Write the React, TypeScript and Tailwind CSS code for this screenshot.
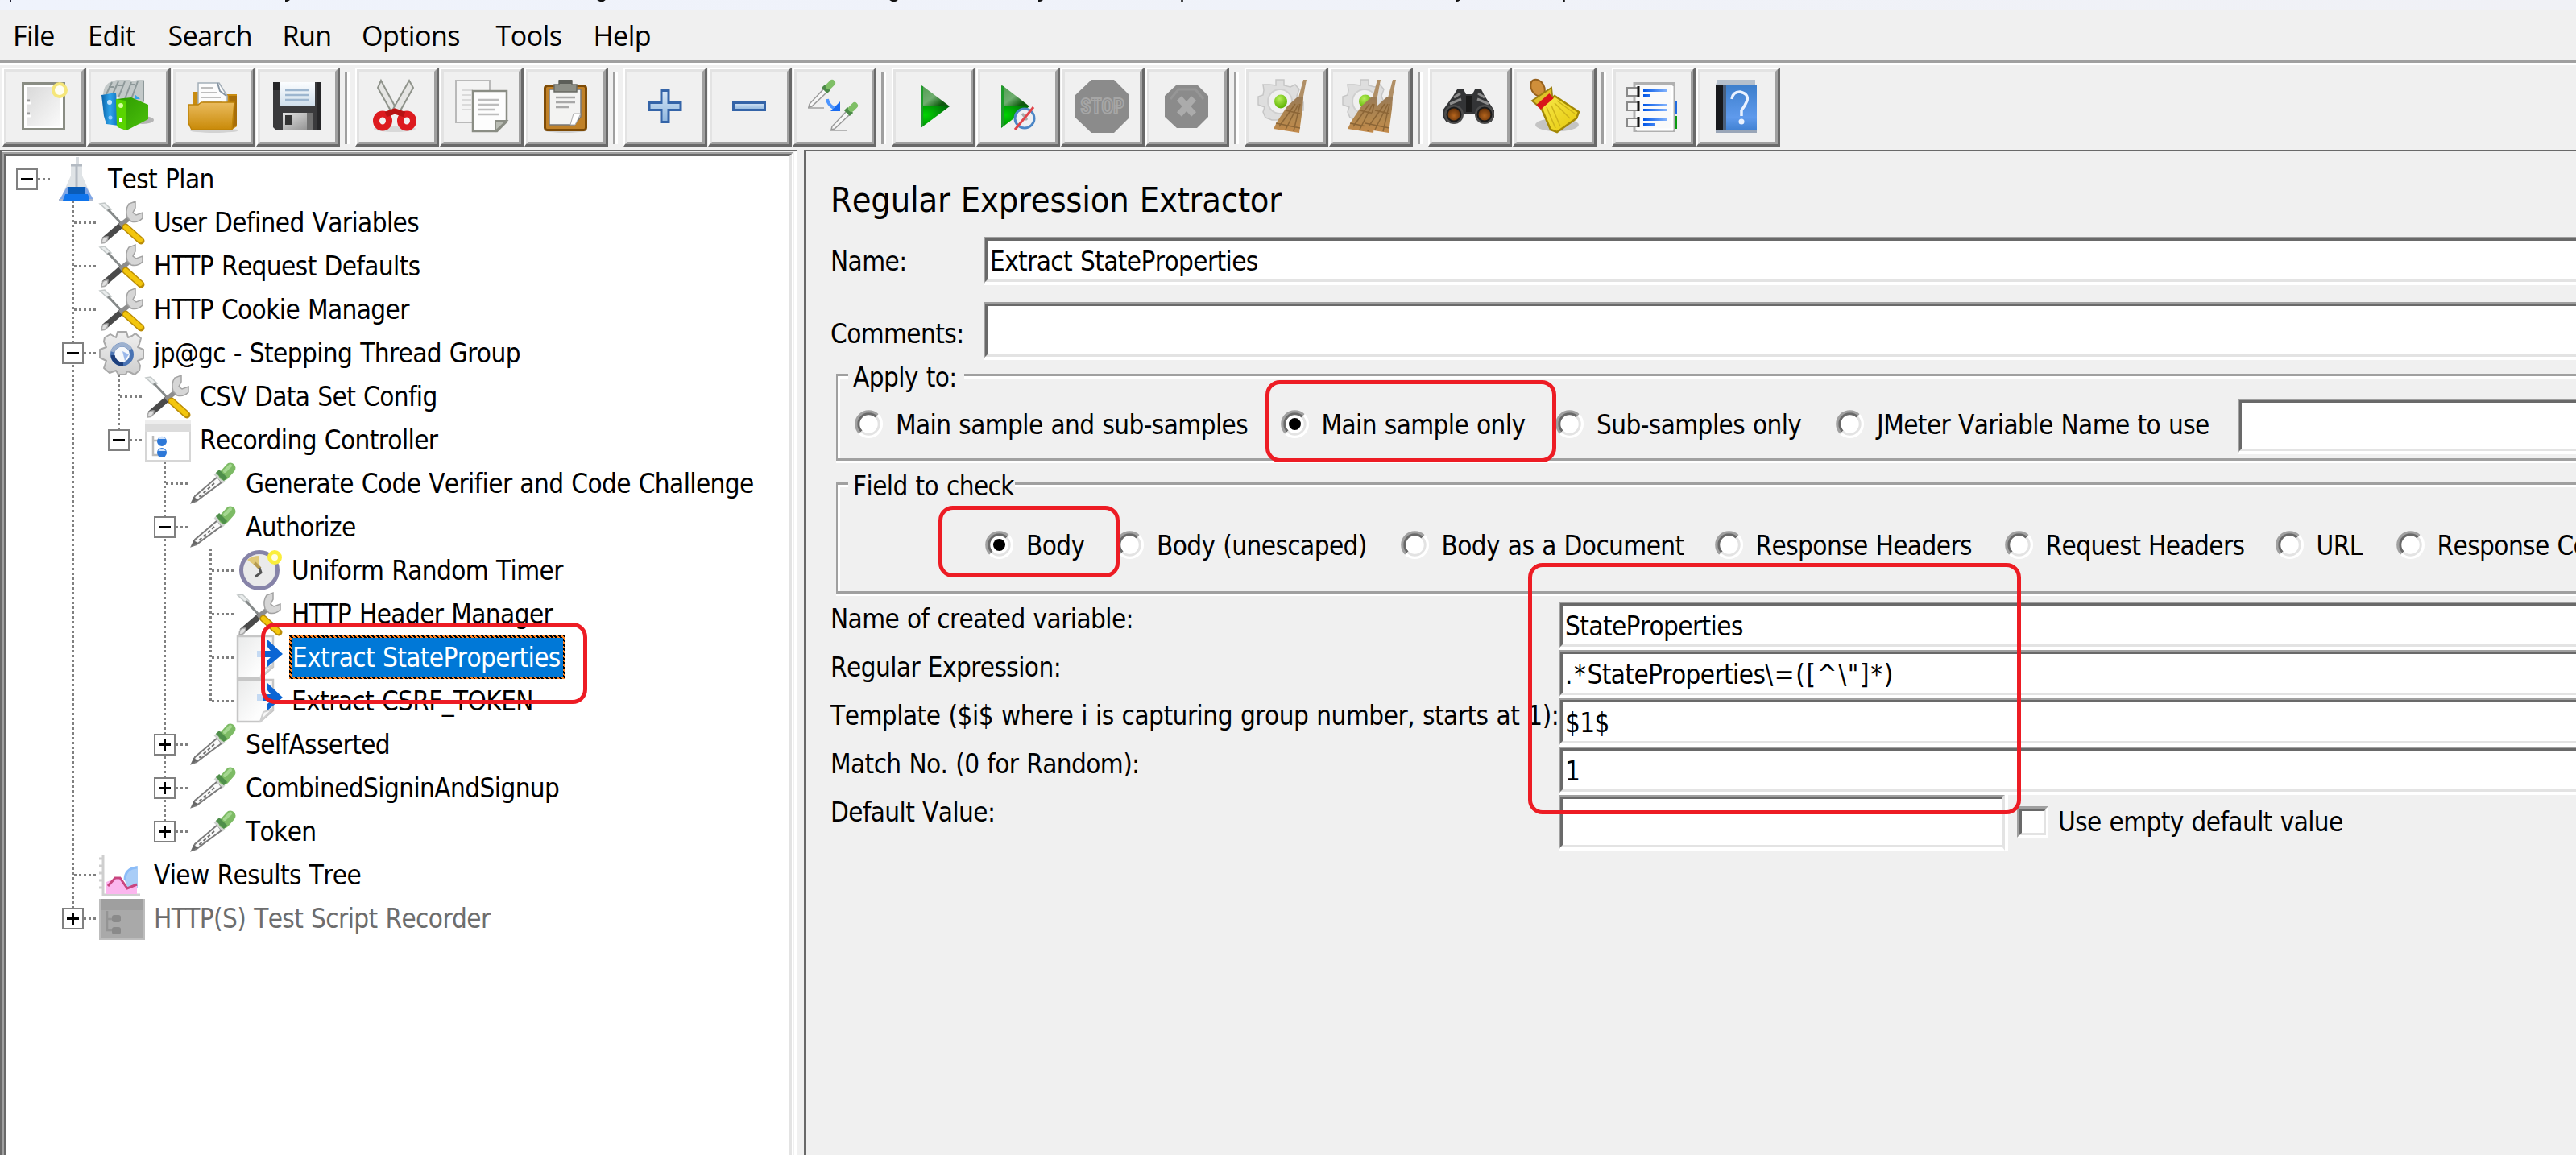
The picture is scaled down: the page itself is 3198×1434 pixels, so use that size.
import React from "react";

/* ---------- toolbar icons (66 x 66) ---------- */

const Defs = () => (
  <svg className="absolute h-0 w-0">
    <defs>
      <linearGradient id="paper" x1="0" y1="0" x2="1" y2="1">
        <stop offset="0" stopColor="#d9d9d9" />
        <stop offset="1" stopColor="#fafafa" />
      </linearGradient>
      <linearGradient id="sheet" x1="0" y1="0" x2="1" y2="1">
        <stop offset="0" stopColor="#e9eaea" />
        <stop offset=".7" stopColor="#fdfdfd" />
      </linearGradient>
      <linearGradient id="blueSpine" x1="0" y1="0" x2="1" y2="0">
        <stop offset="0" stopColor="#0a62a8" />
        <stop offset=".5" stopColor="#2fa3ea" />
        <stop offset="1" stopColor="#0f6fbd" />
      </linearGradient>
      <linearGradient id="greenFace" x1="0" y1="0" x2="1" y2="1">
        <stop offset="0" stopColor="#2d9a00" />
        <stop offset="1" stopColor="#4cc10c" />
      </linearGradient>
      <linearGradient id="folder" x1="0" y1="0" x2="0" y2="1">
        <stop offset="0" stopColor="#eabb5e" />
        <stop offset="1" stopColor="#c98a08" />
      </linearGradient>
      <linearGradient id="label" x1="0" y1="0" x2="0" y2="1">
        <stop offset="0" stopColor="#fbfdff" />
        <stop offset="1" stopColor="#cfdeeb" />
      </linearGradient>
      <linearGradient id="shutter" x1="0" y1="0" x2="1" y2="1">
        <stop offset="0" stopColor="#e2e2e2" />
        <stop offset="1" stopColor="#8c8c8c" />
      </linearGradient>
      <linearGradient id="sky" x1="0" y1="0" x2="0" y2="1">
        <stop offset="0" stopColor="#d6e6f6" />
        <stop offset="1" stopColor="#8db5de" />
      </linearGradient>
      <linearGradient id="playTop" x1="0" y1="0" x2="1" y2="1">
        <stop offset="0" stopColor="#4d9a4d" />
        <stop offset=".5" stopColor="#6fae6f" />
        <stop offset=".8" stopColor="#0f5a0f" />
      </linearGradient>
      <radialGradient id="playLow" cx=".15" cy=".4" r=".9">
        <stop offset="0" stopColor="#00d400" />
        <stop offset="1" stopColor="#00640a" />
      </radialGradient>
      <linearGradient id="straw" x1="0" y1="0" x2="0" y2="1">
        <stop offset="0" stopColor="#9a7b56" />
        <stop offset=".6" stopColor="#b3884f" />
        <stop offset="1" stopColor="#c2894a" />
      </linearGradient>
      <linearGradient id="yellow" x1="0" y1="0" x2="1" y2="1">
        <stop offset="0" stopColor="#f6e84a" />
        <stop offset="1" stopColor="#e6c80a" />
      </linearGradient>
      <linearGradient id="book" x1="0" y1="0" x2="0" y2="1">
        <stop offset="0" stopColor="#3c7ecb" />
        <stop offset=".7" stopColor="#5f9aec" />
        <stop offset="1" stopColor="#3f7fd0" />
      </linearGradient>
      <linearGradient id="ink" gradientUnits="userSpaceOnUse" x1="20" y1="0" x2="52" y2="0">
        <stop offset="0" stopColor="#0055e6" />
        <stop offset="1" stopColor="#8fbcff" />
      </linearGradient>
      <radialGradient id="greenBall" cx=".4" cy=".3" r=".7">
        <stop offset="0" stopColor="#b7ee5a" />
        <stop offset="1" stopColor="#5cb300" />
      </radialGradient>
      <radialGradient id="lens" cx=".5" cy=".6" r=".6">
        <stop offset="0" stopColor="#b5651d" />
        <stop offset="1" stopColor="#5a2b08" />
      </radialGradient>
      <linearGradient id="steel" x1="0" y1="0" x2="0" y2="1">
        <stop offset="0" stopColor="#f0f0f0" />
        <stop offset="1" stopColor="#cfcfcf" />
      </linearGradient>
    </defs>
  </svg>
);

const NewIcon = () => (
  <>
    <rect x="6.5" y="4.5" width="51" height="57" fill="#fff" stroke="#8a8d84" strokeWidth="3" />
    <rect x="11" y="9" width="42" height="48" fill="url(#paper)" />
    <path d="M11 26h4M11 42h4" stroke="#999" strokeWidth="3" />
    <path d="M11 29h5M11 45h5" stroke="#fff" strokeWidth="3" />
    <circle cx="52" cy="13" r="8" fill="#fffef0" stroke="#f5e67a" strokeWidth="4" />
  </>
);

const TemplatesIcon = () => (
  <>
    <ellipse cx="50" cy="50" rx="14" ry="5" fill="#b5b5b5" />
    <path d="M1 18 Q2 5 12 2 L18 0 H34 L38 2 L44 0 H52 V28 H30 L20 22 H4Z" fill="#c3c9c9" />
    <path d="M12 3 L5 18M20 2 L12 20M28 2 L20 22M36 3 L28 24M44 2 L36 24M51 2V26M8 9h6M20 7h6M34 6h6" stroke="#8d9899" strokeWidth="2" fill="none" />
    <path d="M40 18l7 6h-6z" fill="#35a3e8" />
    <path d="M-1 19 L17 16 L20 57 L5 55 L2 45Z" fill="url(#blueSpine)" />
    <circle cx="9" cy="28" r="3" fill="#bfe3ff" />
    <circle cx="10" cy="47" r="2.5" fill="#8ccaff" />
    <path d="M17 24 L36 22 L57 31 V49 L30 63 L19 59Z" fill="url(#greenFace)" />
    <path d="M17 24 L29 26 L30 63 L18 58Z" fill="#59d400" />
    <circle cx="23" cy="32" r="3" fill="#d6ff9e" />
    <rect x="21" y="48" width="4" height="4" fill="#fff" />
  </>
);

const OpenIcon = () => (
  <>
    <ellipse cx="34" cy="63" rx="30" ry="3" fill="#d2d2d2" />
    <path d="M8 15h8v20H8zM44 18h18v40l-6 4H44z" fill="#c98c10" />
    <path d="M52 20h10v36l-6 5z" fill="#a86e0a" />
    <path d="M14 4h26l10 16v14H14z" fill="#fcfcfc" stroke="#a3aeb8" strokeWidth="1.5" />
    <path d="M38 4l3 10 8 6" fill="none" stroke="#8795a3" strokeWidth="2" />
    <path d="M18 10h15M18 16h20M18 22h24M20 28h24" stroke="#bdbdbd" strokeWidth="2" />
    <path d="M2 31h12l4-3h41l-3 34H6L2 54z" fill="url(#folder)" stroke="#bd8208" strokeWidth="1.5" />
  </>
);

const SaveIcon = () => (
  <>
    <path d="M2 3h60v60H6l-4-4z" fill="#3a3a3c" />
    <path d="M2 3h8v10H2zM56 3h6v60h-6z" fill="#262628" />
    <rect x="11" y="3" width="43" height="30" fill="url(#label)" />
    <path d="M17 13h30M17 19h30M17 25h30" stroke="#9db6cf" strokeWidth="2.5" />
    <rect x="14" y="41" width="38" height="21" fill="url(#shutter)" />
    <rect x="17" y="44" width="9" height="12" fill="#333" />
    <path d="M44 41h8v21h-8z" fill="#707070" />
  </>
);

const CutIcon = () => (
  <>
    <ellipse cx="30" cy="61" rx="26" ry="4" fill="#d8d8d8" />
    <path d="M13 1 L9 10 L26 40 L33 38Z" fill="#e6e6e4" stroke="#8f938b" strokeWidth="2" />
    <path d="M48 1 L53 10 L36 40 L27 38Z" fill="#e6e6e4" stroke="#8f938b" strokeWidth="2" />
    <ellipse cx="15" cy="51" rx="8" ry="8.5" fill="none" stroke="#dd1b1f" strokeWidth="8" />
    <ellipse cx="45" cy="51" rx="8" ry="8.5" fill="none" stroke="#dd1b1f" strokeWidth="8" />
    <path d="M19 43 L30 39 L42 43" stroke="#b81212" strokeWidth="7" fill="none" />
  </>
);

const CopyIcon = () => (
  <>
    <rect x="1" y="1" width="42" height="52" fill="#f4f4f4" stroke="#b9b9b9" strokeWidth="2" />
    <path d="M8 13h14M8 19h12M8 25h12M8 31h12M8 37h12" stroke="#dadada" strokeWidth="2" />
    <path d="M22 14h42v38L52 64H22z" fill="#fdfdfd" stroke="#8a8d84" strokeWidth="2.5" />
    <path d="M29 25h26M29 31h26M29 37h20M29 43h26" stroke="#bdbdbd" strokeWidth="2.5" />
    <path d="M64 51H50v13z" fill="#b9bcb4" stroke="#8a8d84" strokeWidth="2" />
  </>
);

const PasteIcon = () => (
  <>
    <ellipse cx="32" cy="63" rx="26" ry="3" fill="#d0d0d0" />
    <rect x="6.5" y="7.5" width="51" height="55" rx="3" fill="#c08128" stroke="#7d4b07" strokeWidth="3" />
    <path d="M12 12h39v34l-8 10H12z" fill="#f3f3f2" stroke="#777" strokeWidth="1.5" />
    <path d="M20 22h24M20 28h24M20 34h16" stroke="#a8a8a8" strokeWidth="2.5" />
    <path d="M51 42h-9l-4 14h6z" fill="#fff" stroke="#aaa" strokeWidth="1" />
    <path d="M24 1h16v5h6v9H18V6h6z" fill="#8c8e86" stroke="#686a63" strokeWidth="1.5" />
    <rect x="24" y="0" width="16" height="5" fill="#5c5e58" />
  </>
);

const PlusIcon = () => (
  <path d="M28 13.500h9v15h15v9h-15v15h-9v-15h-15v-9h15z" fill="url(#sky)" stroke="#3464a8" strokeWidth="3" />
);

const MinusIcon = () => <rect x="12.500" y="28.500" width="39" height="9" fill="url(#sky)" stroke="#3464a8" strokeWidth="3" />;

const MiniPipette = () => (
  <>
    <path d="M0 35h20" stroke="#b5b5b5" strokeWidth="2" />
    <path d="M20 11 L2 30 L1 34 L5 33 L24 15Z" fill="#f7f7f7" stroke="#999" strokeWidth="1.500" />
    <path d="M19 8 L26 15" stroke="#4c8a48" strokeWidth="6" />
    <path d="M26 8 L30 4" stroke="#7fbf66" strokeWidth="8" strokeLinecap="round" />
  </>
);

const ToggleIcon = () => (
  <>
    <MiniPipette />
    <g transform="translate(28 28)">
      <MiniPipette />
    </g>
    <path d="M24 24 Q25 31 32 35" fill="none" stroke="#4c95ff" strokeWidth="4" />
    <path d="M40 27v12H28z" fill="#1a6cf0" />
  </>
);

const PlayIcon = () => (
  <>
    <path d="M17 6 L53 33 H17Z" fill="url(#playTop)" />
    <path d="M17 33 H53 L17 60Z" fill="url(#playLow)" />
    <path d="M18.500 8v50" stroke="#1e9a2a" strokeWidth="3" />
  </>
);

const PlayNoTimersIcon = () => (
  <>
    <path d="M12 6 L47 33 H12Z" fill="url(#playTop)" />
    <path d="M12 33 H47 L12 60Z" fill="url(#playLow)" />
    <path d="M13.500 8v50" stroke="#1e9a2a" strokeWidth="3" />
    <circle cx="41" cy="48" r="12" fill="#eef0f3" stroke="#4b86c6" strokeWidth="3" />
    <path d="M38 42l6 8" stroke="#aaa" strokeWidth="3" />
    <path d="M52 34 L29 62" stroke="#e0454a" strokeWidth="3" />
  </>
);

const StopIcon = () => (
  <>
    <path d="M19 0h28l19 19v28L47 66H19L-1 47V19z" fill="#8b8b8b" />
    <text x="32.500" y="42" textAnchor="middle" textLength="54" lengthAdjust="spacingAndGlyphs" fontFamily="Roboto, sans-serif" fontWeight="700" fontSize="26" letterSpacing="0" fill="#8b8b8b" stroke="#a6a6a6" strokeWidth="2">
      STOP
    </text>
  </>
);

const ShutdownIcon = () => (
  <>
    <path d="M20 6h25l14 14v26L45 60H20L5 46V20z" fill="#8b8b8b" />
    <path d="M12 24l10-12h21l10 12" fill="none" stroke="#969696" strokeWidth="3" />
    <path d="M23 23l18 20M41 23L23 43" stroke="#ababab" strokeWidth="8" />
  </>
);

const GearPart = () => (
  <>
    <path d="M20 0h10v7l8 2 6-3 5 6-3 8 3 8h5v10h-5l-4 8-10 4H15l-8-3-3-7 2-6-8-3V21l6-2 1-6-1-7h8l8 1z" fill="#dedede" stroke="#c6c6c6" strokeWidth="1.500" />
    <circle cx="25" cy="27" r="15" fill="#f0f0f0" stroke="#cfcfcf" strokeWidth="2" />
    <ellipse cx="26" cy="27" rx="8" ry="8.500" fill="url(#greenBall)" />
  </>
);

const BroomPart = () => (
  <>
    <path d="M54 0h4l-5 26h-6z" fill="#b08f66" />
    <path d="M46 22h8l-1 14-4 30-32-5 5-10 12-18z" fill="url(#straw)" />
    <path d="M44 30L24 58M48 30L32 62M50 30L42 64M20 54l30 6M32 38l18 4" stroke="#8b6536" strokeWidth="1.500" />
  </>
);

const ClearIcon = () => (
  <>
    <GearPart />
    <BroomPart />
  </>
);

const ClearAllIcon = () => (
  <>
    <GearPart />
    <g transform="translate(-13 0)">
      <BroomPart />
    </g>
    <g transform="translate(6 0)">
      <BroomPart />
    </g>
  </>
);

const SearchIcon = () => (
  <>
    <path d="M17 12h8l3 6h8l3-6h8l4 8 12 18v8l-4 7H46l-4-10H22l-4 10H4l-5-7v-8L12 20z" fill="#333436" />
    <path d="M13 22l8-5M43 17l8 5M8 30l14-6M42 24l14 6" stroke="#8b8b8b" strokeWidth="3" />
    <path d="M28 20h8v20h-8z" fill="#1a1a1a" />
    <circle cx="13" cy="43" r="12" fill="#4c4c4c" />
    <circle cx="51" cy="43" r="12" fill="#4c4c4c" />
    <circle cx="13" cy="43" r="8.500" fill="url(#lens)" stroke="#1b1b1b" strokeWidth="2" />
    <circle cx="51" cy="43" r="8.500" fill="url(#lens)" stroke="#1b1b1b" strokeWidth="2" />
  </>
);

const ResetSearchIcon = () => (
  <>
    <ellipse cx="36" cy="56" rx="27" ry="8" fill="#c4c4c4" />
    <ellipse cx="12" cy="10" rx="8" ry="11" transform="rotate(-30 12 10)" fill="#cf8f3a" stroke="#96601c" strokeWidth="2" />
    <path d="M5 26 L29 10 L30 20 L14 34Z" fill="#e0c228" stroke="#9c7f10" strokeWidth="2" />
    <path d="M33 20 L63 40 L60 48 L36 65 L28 62 L16 34Z" fill="url(#yellow)" stroke="#a38806" strokeWidth="2.500" />
    <path d="M29 32L40 58M33 29L52 48M36 26L58 42M23 34L34 60" stroke="#cdb21a" strokeWidth="1.500" />
    <path d="M13 34 L29 20" stroke="#d8161b" strokeWidth="8" />
  </>
);

const FunctionIcon = () => (
  <>
    <rect x="56" y="27" width="6" height="16" fill="#1f6be0" />
    <rect x="56" y="45" width="6" height="16" fill="#0a9a10" />
    <rect x="9" y="4.500" width="49" height="59" fill="#fafafa" stroke="#b0b0b0" strokeWidth="3" />
    <path d="M12 62h45M56 8v54" stroke="#fff" strokeWidth="3" />
    {[14, 32, 52].map((y) => (
      <g key={y}>
        <rect x="0" y={y - 4} width="14" height="10" fill="#f4f4f4" stroke="#8a8a8a" strokeWidth="2" />
        <path d={`M14 ${y - 6}v13`} stroke="#111" strokeWidth="3" />
      </g>
    ))}
    <path d="M20 12h30v3H20zM20 18h9v3h-9zM20 30h30v3H20zM20 36h30v3H20zM20 48h30v3H20zM20 54h15v3H20z" fill="url(#ink)" />
  </>
);

const HelpIcon = () => (
  <>
    <path d="M7 0h47v7H5z" fill="#b4bfcc" />
    <rect x="15" y="6" width="41" height="58" fill="url(#book)" />
    <path d="M5 6h9v58H5z" fill="#17181c" />
    <path d="M14 6h4v58h-4z" fill="#4a5f7c" />
    <path d="M5 63h51v3H5z" fill="#9aa6b8" />
    <path d="M25 24 Q26 15 35 15 Q46 17 44 26 Q41 33 37 38 V45" fill="none" stroke="#eaf2ff" strokeWidth="3.500" />
    <circle cx="37" cy="52" r="3.500" fill="#eaf2ff" />
  </>
);

const toolGroups: React.FC[][] = [
  [NewIcon, TemplatesIcon, OpenIcon, SaveIcon],
  [CutIcon, CopyIcon, PasteIcon],
  [PlusIcon, MinusIcon, ToggleIcon],
  [PlayIcon, PlayNoTimersIcon, StopIcon, ShutdownIcon],
  [ClearIcon, ClearAllIcon],
  [SearchIcon, ResetSearchIcon],
  [FunctionIcon, HelpIcon],
];

const ToolButton = ({ Icon }: { Icon: React.FC }) => (
  <button className="h-[98px] w-[104px] shrink-0 border-t-2 border-r-[3px] border-b-[3px] border-l-2 border-t-white border-r-[#696969] border-b-[#696969] border-l-white">
    <span className="flex h-full w-full border-t-[3px] border-r-[3px] border-b-[3px] border-l-[3px] border-t-[#e3e3e3] border-r-[#a0a0a0] border-b-[#a0a0a0] border-l-[#e3e3e3] pt-[10px] pl-[14px]">
      <svg width="66" height="66" viewBox="0 0 66 66" className="shrink-0 overflow-visible">
        <Icon />
      </svg>
    </span>
  </button>
);

/* ---------- tree icons (57 x 54) ---------- */

const Flask = () => (
  <>
    <path d="M28 0h4v10h-4z" fill="#d8dce0" />
    <path d="M22 9h14v14l12 27q2 4-3 4H13q-5 0-3-4l12-27z" fill="#dfe3e6" />
    <path d="M22 10h14M29 10v28" stroke="#b3bac2" strokeWidth="3" />
    <path d="M17 37h24l8 14v3H9v-3z" fill="#7fa6e6" />
    <path d="M19 37h20v10H19z" fill="#0a5cb8" />
    <path d="M15 46h28l3 8H12z" fill="#0f74ec" />
    <path d="M7 53h5M45 53h5" stroke="#a9b6cf" strokeWidth="2" />
  </>
);

const Tools = () => (
  <>
    <path d="M1 4l6-1 8 8-4 2z" fill="#e9ecec" stroke="#c3c8c8" strokeWidth="1.500" />
    <path d="M11 11 L30 31" stroke="#868a8a" strokeWidth="3" />
    <path d="M6 49 L28 30" stroke="#4a4a4a" strokeWidth="7.500" />
    <path d="M3 53q0-9 8-8 0 8-8 8z" fill="#e0e0e0" stroke="#aaa" strokeWidth="1.500" />
    <path d="M26 31 L40 20" stroke="#8d8d8d" strokeWidth="6" />
    <path d="M35 21q-3-10 2-17l8-3v8l-3 6 4 3 8-3v7q-6 6-14 4z" fill="#d6d6d6" stroke="#a2a2a2" strokeWidth="1.500" />
    <path d="M33 33 L52 50" stroke="#b98c08" strokeWidth="9" strokeLinecap="round" />
    <path d="M33 33 L51 49" stroke="#f3c60d" strokeWidth="6" strokeLinecap="round" />
  </>
);

const Gear = () => (
  <>
    <path
      d="M23 1h11l2 7 5-2 4-3 7 6-2 7-2 4 7 3v11l-7 3 3 6-1 6-6 5-6-3-3-1-2 4H24l-3-5-8 3-7-6 3-9-8-4V23l8-3-3-7 1-5 7-4 7 4z"
      fill="url(#steel)"
      stroke="#a9a9a9"
      strokeWidth="2"
      strokeLinejoin="round"
    />
    <circle cx="28.500" cy="29" r="12" fill="#f6f8fb" stroke="#4a74b4" strokeWidth="5" />
    <path d="M17 30a12 12 0 0 0 13 11" fill="none" stroke="#1d3f7c" strokeWidth="5" />
    <path d="M17 26a12 12 0 0 1 22-3" fill="none" stroke="#9db1cf" strokeWidth="5" />
    <path d="M29 25l8 4-5 8z" fill="#9bb8ea" />
  </>
);

const Controller = () => (
  <>
    <rect x="1" y="3" width="55" height="50" fill="#fff" stroke="#d6d6d6" strokeWidth="2" />
    <rect x="0" y="2" width="57" height="15" fill="#dcdcdc" />
    <rect x="0" y="2" width="57" height="6" fill="#ededed" />
    <path d="M10 22v24h8M10 28h6" fill="none" stroke="#bcbcbc" strokeWidth="2.500" />
    <circle cx="21" cy="29" r="6" fill="#2d78d8" />
    <circle cx="21" cy="43" r="6" fill="#2d78d8" />
    <path d="M16 26q5-7 10 0zM16 41q5-6 10 0z" fill="#cfe2fb" />
  </>
);

const ControllerOff = () => (
  <>
    <rect x="0" y="3" width="57" height="51" fill="#bdbdbd" />
    <rect x="2" y="3" width="53" height="48" fill="#a9a9a9" />
    <rect x="2" y="3" width="53" height="14" fill="#9f9f9f" />
    <path d="M10 18v24h8M10 28h6" fill="none" stroke="#949494" strokeWidth="2.500" />
    <rect x="16" y="23" width="11" height="9" rx="3" fill="#8a8a8a" />
    <rect x="16" y="38" width="11" height="9" rx="3" fill="#8a8a8a" />
  </>
);

const Pipette = () => (
  <>
    <path d="M33 19 L5 43 L1 51 L7 49 L38 26Z" fill="#fafafa" stroke="#7b7b7b" strokeWidth="2" />
    <path d="M29 27 L10 44" stroke="#6e6e6e" strokeWidth="2" strokeDasharray="4 3" />
    <path d="M1 51l2-7 6 3z" fill="#666" />
    <path d="M30 15 L41 26" stroke="#cfd3cf" strokeWidth="4" />
    <path d="M41 17 L49 8" stroke="#7dbb65" strokeWidth="13" strokeLinecap="round" />
    <path d="M33 12 L43 22" stroke="#4f8f4a" strokeWidth="6" />
    <path d="M42 12 L49 5" stroke="#a5d791" strokeWidth="4" strokeLinecap="round" />
  </>
);

const Timer = () => (
  <>
    <circle cx="28" cy="27" r="22.500" fill="#eaeaea" stroke="#8683a8" strokeWidth="5" />
    <path d="M28 25V9Q19 9 13 14z" fill="#e0c878" />
    <path d="M22 18l7 7" fill="none" stroke="#b59a50" strokeWidth="4" />
    <path d="M28 24l2 6-7 5" fill="none" stroke="#555" strokeWidth="3" />
    <circle cx="47" cy="11" r="6.500" fill="#fffde0" stroke="#fbee3c" strokeWidth="5" />
  </>
);

const Extractor = () => (
  <>
    <path d="M1 1h44v38L29 53H1z" fill="url(#sheet)" stroke="#c6c6c6" strokeWidth="2.500" />
    <path d="M29 53l4-12 12-4z" fill="#f7f7f7" stroke="#cfcfcf" strokeWidth="2" />
    <rect x="25" y="19" width="10" height="8" fill="#c5daf3" />
    <path d="M38 5 L57 23 L38 39 V31 L42 27 H33 V19 H42 L38 14Z" fill="#0b65d4" />
  </>
);

const Results = () => (
  <>
    <path d="M5 3v49h46M0 7h5M0 16h5M0 25h5M0 34h5M0 43h5" fill="none" stroke="#cfcfcf" strokeWidth="3" />
    <path d="M31 32 Q32 18 48 16V44H36z" fill="#a9cdf7" />
    <path d="M32 34 Q32 19 47 18" fill="none" stroke="#8bbcf8" strokeWidth="3" />
    <path d="M9 36 L24 30 L34 44 L47 40V51H9z" fill="#fbb6ee" />
    <path d="M11 41 L20 31 L26 31 L35 44 L47 39" fill="none" stroke="#c9457f" strokeWidth="3" />
  </>
);

/* ---------- tree ---------- */

type Row = {
  level: number;
  label: string;
  Icon: React.FC;
  exp?: "open" | "closed";
  lines?: number[]; // ancestor columns whose connector continues past this row
  end?: boolean; // last child of its parent
  selected?: boolean;
  off?: boolean;
};

const rows: Row[] = [
  { level: 0, label: "Test Plan", Icon: Flask, exp: "open", end: true },
  { level: 1, label: "User Defined Variables", Icon: Tools },
  { level: 1, label: "HTTP Request Defaults", Icon: Tools },
  { level: 1, label: "HTTP Cookie Manager", Icon: Tools },
  { level: 1, label: "jp@gc - Stepping Thread Group", Icon: Gear, exp: "open" },
  { level: 2, label: "CSV Data Set Config", Icon: Tools, lines: [1] },
  { level: 2, label: "Recording Controller", Icon: Controller, exp: "open", lines: [1], end: true },
  { level: 3, label: "Generate Code Verifier and Code Challenge", Icon: Pipette, lines: [1] },
  { level: 3, label: "Authorize", Icon: Pipette, exp: "open", lines: [1] },
  { level: 4, label: "Uniform Random Timer", Icon: Timer, lines: [1, 3] },
  { level: 4, label: "HTTP Header Manager", Icon: Tools, lines: [1, 3] },
  { level: 4, label: "Extract StateProperties", Icon: Extractor, lines: [1, 3], selected: true },
  { level: 4, label: "Extract CSRF_TOKEN", Icon: Extractor, lines: [1, 3], end: true },
  { level: 3, label: "SelfAsserted", Icon: Pipette, exp: "closed", lines: [1] },
  { level: 3, label: "CombinedSigninAndSignup", Icon: Pipette, exp: "closed", lines: [1] },
  { level: 3, label: "Token", Icon: Pipette, exp: "closed", lines: [1], end: true },
  { level: 1, label: "View Results Tree", Icon: Results },
  { level: 1, label: "HTTP(S) Test Script Recorder", Icon: ControllerOff, exp: "closed", end: true, off: true },
];

const vDots = "w-[3px] bg-[repeating-linear-gradient(to_bottom,#808080_0_3px,#fff_3px_6px)]";
const hDots = "h-[3px] bg-[repeating-linear-gradient(to_right,#808080_0_3px,#fff_3px_6px)]";

const Guide = ({ on }: { on: boolean }) => (
  <div className="flex h-full w-[57px] shrink-0 pl-6">{on && <div className={`${vDots} h-full`} />}</div>
);

const Connector = ({ row }: { row: Row }) => (
  <div className="relative flex h-full w-[58px] shrink-0 pl-6">
    {row.level > 0 && <div className={`${vDots} ${row.end ? "h-[27px]" : "h-full"}`} />}
    <div className={`${hDots} absolute top-[26px] left-[27px] w-[27px]`} />
    {row.exp && (
      <div className="absolute top-[14px] left-[12px] flex h-[27px] w-[27px] items-center justify-center border-2 border-[#808080] bg-white">
        <div className="h-[3px] w-[15px] bg-black" />
        {row.exp === "closed" && <div className="absolute h-[15px] w-[3px] bg-black" />}
      </div>
    )}
  </div>
);

const TreeRow = ({ row }: { row: Row }) => (
  <div className="flex h-[54px] items-center">
    {Array.from({ length: row.level }, (_, i) => (
      <Guide key={i} on={!!row.lines?.includes(i)} />
    ))}
    <Connector row={row} />
    <svg width="57" height="54" viewBox="0 0 57 54" className="shrink-0 overflow-visible">
      <row.Icon />
    </svg>
    {row.selected ? (
      <div className="ml-[8px] flex h-[54px] w-[343px] shrink-0 items-center bg-[repeating-linear-gradient(45deg,#ff8728_0_2px,#000_2px_4px)] p-[3px]">
        <div className="h-full w-full bg-[#0078d7] pl-px leading-[50px] text-white">{row.label}</div>
      </div>
    ) : (
      <div className={`mt-[2px] ml-[11px] ${row.off ? "text-[#6d6d6d]" : ""}`}>{row.label}</div>
    )}
  </div>
);

/* ---------- form controls ---------- */

const Field = ({ value = "", className = "" }: { value?: React.ReactNode; className?: string }) => (
  <div className={`shrink-0 border-t-2 border-b-4 border-l-2 border-t-[#a0a0a0] border-b-white border-l-[#a0a0a0] ${className}`}>
    <div className="flex h-full items-center border-t-[3px] border-b-[3px] border-l-[3px] border-t-[#696969] border-b-[#e3e3e3] border-l-[#696969] bg-white pt-[3px] pl-[3px]">
      <span>{value}</span>
    </div>
  </div>
);

const Radio = ({ label, on, className }: { label: string; on?: boolean; className: string }) => (
  <div className={`flex shrink-0 items-center whitespace-nowrap ${className}`}>
    <svg width="37" height="37" viewBox="0 0 37 37" className="shrink-0">
      <circle cx="18.500" cy="18.500" r="15" fill="#fff" />
      <path d="M29.500 7.500A15.500 15.500 0 1 0 7.500 29.500" fill="none" stroke="#a0a0a0" strokeWidth="3.500" />
      <path d="M7.500 29.500A15.500 15.500 0 1 0 29.500 7.500" fill="none" stroke="#fff" strokeWidth="4" />
      <path d="M27.500 9.500A12.700 12.700 0 1 0 9.500 27.500" fill="none" stroke="#696969" strokeWidth="3" />
      <path d="M9.500 27.500A12.700 12.700 0 1 0 27.500 9.500" fill="none" stroke="#e3e3e3" strokeWidth="3" />
      {on && <circle cx="18.500" cy="18.500" r="7.500" fill="#000" />}
    </svg>
    <span className="mt-[2px] ml-[15px]">{label}</span>
  </div>
);

const Group = ({ title, legend, children, className }: { title: string; legend: string; children: React.ReactNode; className: string }) => (
  <div className={`relative border-t-[3px] border-b-[3px] border-l-2 border-[#a0a0a0] shadow-[0_3px_0_#fff] ${className}`}>
    <div className="h-full border-t-[3px] border-l-[3px] border-white">{children}</div>
    <div className={`absolute -top-[22px] left-[13px] bg-[#f0f0f0] pl-[6px] leading-[48px] ${legend}`}>{title}</div>
  </div>
);

const params: [string, React.ReactNode, string][] = [
  ["Name of created variable:", "StateProperties", ""],
  [
    "Regular Expression:",
    <>
      <span className="tracking-[1.6px]">.*</span>StateProperties<span className="tracking-[1.6px]">{'\\=([^\\"]*)'}</span>
    </>,
    "",
  ],
  ["Template ($i$ where i is capturing group number, starts at 1):", "$1$", "tracking-[-0.5px]"],
  ["Match No. (0 for Random):", "1", ""],
];

const marks = "absolute rounded-[18px] border-[5px] border-[#ed1c24]";

export default function App() {
  return (
    <div className="relative flex h-[1434px] w-[3198px] flex-col overflow-hidden bg-[#f0f0f0] font-['DejaVu_Sans_Condensed','DejaVu_Sans',sans-serif] text-[33px] leading-[48px] tracking-[-0.6px] whitespace-nowrap text-black [font-kerning:none] [font-stretch:condensed] [word-spacing:1px]">
      <Defs />
      {/* bottom edge of the window title */}
      <div className="h-[13px] shrink-0 bg-linear-to-r from-[#eff3fc] to-[#f0f1f6]">
        <svg width="3198" height="13" viewBox="0 0 3198 13">
          <path d="M13.500 0v2" stroke="#223" strokeWidth="1" />
          <path d="M354 1q4 0 6-3M742 -1q5 4 9 0M1105 -1q5 4 9 0M1289 1q4 0 6-3M1807 1q4 0 6-3M1467.500 0v2M1941.500 0v2" fill="none" stroke="#111" strokeWidth="2.500" />
        </svg>
      </div>

      <nav className="flex h-[62px] shrink-0 items-center pl-[16px] font-['Open_Sans',sans-serif] text-[34px] tracking-[-0.5px] [font-stretch:normal]">
        <span className="w-[93px]">File</span>
        <span className="w-[99.500px]">Edit</span>
        <span className="w-[142px]">Search</span>
        <span className="w-[98.500px]">Run</span>
        <span className="w-[166.500px]">Options</span>
        <span className="w-[121px]">Tools</span>
        <span>Help</span>
      </nav>

      <div className="flex h-[111px] shrink-0 border-t-[3px] border-[#a0a0a0]">
        <div className="flex w-full gap-[19px] border-t-[3px] border-white pt-[3px] pl-[3px]">
          {toolGroups.map((group, i) => (
            <div key={i} className="flex gap-px">
              {group.map((Icon, j) => (
                <ToolButton key={j} Icon={Icon} />
              ))}
              {i < toolGroups.length - 1 && (
                <div className="mt-[5px] -mr-[12px] ml-[5px] h-[90px] w-[6px] border-r-[3px] border-l-[3px] border-r-white border-l-[#a0a0a0]" />
              )}
            </div>
          ))}
        </div>
      </div>

      <div className="flex min-h-0 grow">
        <div className="flex w-[989px] shrink-0 border-t-2 border-l-2 border-[#696969]">
          <div className="flex grow border-t border-r-[3px] border-l border-t-[#f0f0f0] border-r-white border-l-[#f0f0f0] pr-px">
            <div className="flex grow border-t-2 border-r-2 border-l-2 border-t-[#a0a0a0] border-r-white border-l-[#a0a0a0]">
              <div className="grow border-t-[3px] border-r-[3px] border-l-[3px] border-t-[#696969] border-r-[#e3e3e3] border-l-[#696969] bg-white pt-px">
                {rows.map((row) => (
                  <TreeRow key={row.label} row={row} />
                ))}
              </div>
            </div>
          </div>
        </div>

        <main className="ml-[9px] grow overflow-hidden border-t-2 border-l-[3px] border-[#696969] pl-[30px]">
          <h1 className="mt-[30px] text-[43px] leading-[60px] tracking-[-0.2px]">Regular Expression Extractor</h1>
          <div className="mt-[16px] flex">
            <label className="w-[190px] shrink-0 pt-px leading-[60px]">Name:</label>
            <Field value="Extract StateProperties" className="h-[60px] w-[2000px]" />
          </div>
          <div className="mt-[20px] flex h-[72px]">
            <label className="w-[190px] shrink-0 pt-[16px] leading-[48px]">Comments:</label>
            <Field className="h-[72px] w-[2000px]" />
          </div>

          <Group title="Apply to:" legend="w-[144px]" className="mt-[17px] ml-[7px] h-[108px] w-[2200px]">
            <div className="flex h-full pl-[17px]">
              <Radio className="mt-[14px] w-[528.500px]" label="Main sample and sub-samples" />
              <Radio className="mt-[14px] w-[341.500px]" label="Main sample only" on />
              <Radio className="mt-[14px] w-[348px]" label="Sub-samples only" />
              <Radio className="mt-[14px] w-[500px]" label="JMeter Variable Name to use" />
              <Field className="mt-[25px] h-[69px] w-[500px]" />
            </div>
          </Group>

          <Group title="Field to check" legend="w-[207px]" className="mt-[27px] ml-[7px] h-[138px] w-[2200px]">
            <div className="flex h-full pt-[14px] pl-[179px]">
              <Radio className="w-[162px]" label="Body" on />
              <Radio className="w-[353.500px]" label="Body (unescaped)" />
              <Radio className="w-[390px]" label="Body as a Document" />
              <Radio className="w-[360px]" label="Response Headers" />
              <Radio className="w-[336px]" label="Request Headers" />
              <Radio className="w-[150px]" label="URL" />
              <Radio className="w-[300px]" label="Response Code" />
            </div>
          </Group>

          <div className="mt-[10px]">
            {params.map(([label, value, fit]) => (
              <div key={label} className="flex h-[60px]">
                <label className={`w-[904px] shrink-0 leading-[43px] ${fit}`}>{label}</label>
                <Field value={value} className="h-[60px] w-[1400px]" />
              </div>
            ))}
            <div className="flex h-[69px]">
              <label className="w-[904px] shrink-0 leading-[43px]">Default Value:</label>
              <div className="w-[558px] shrink-0 border-r-4 border-white">
                <Field className="h-[69px] border-r-[3px] border-r-[#e3e3e3]" />
              </div>
              <div className="mt-[14px] ml-[11px] h-[39px] w-[39px] border-t-[3px] border-r-[3px] border-b-[3px] border-l-[3px] border-t-[#a0a0a0] border-r-white border-b-white border-l-[#a0a0a0]">
                <div className="h-full border-t-[3px] border-r-2 border-b-[3px] border-l-[3px] border-t-[#696969] border-r-[#e3e3e3] border-b-[#e3e3e3] border-l-[#696969] bg-white" />
              </div>
              <span className="ml-[12px] pt-[10px]">Use empty default value</span>
            </div>
          </div>
        </main>
      </div>

      {/* highlight annotations drawn over the window */}
      <div className={`${marks} top-[773px] left-[324px] h-[101px] w-[405px]`} />
      <div className={`${marks} top-[472px] left-[1571px] h-[102px] w-[361px]`} />
      <div className={`${marks} top-[628px] left-[1165px] h-[89px] w-[225px]`} />
      <div className={`${marks} top-[699px] left-[1897px] h-[312px] w-[612px]`} />
    </div>
  );
}
